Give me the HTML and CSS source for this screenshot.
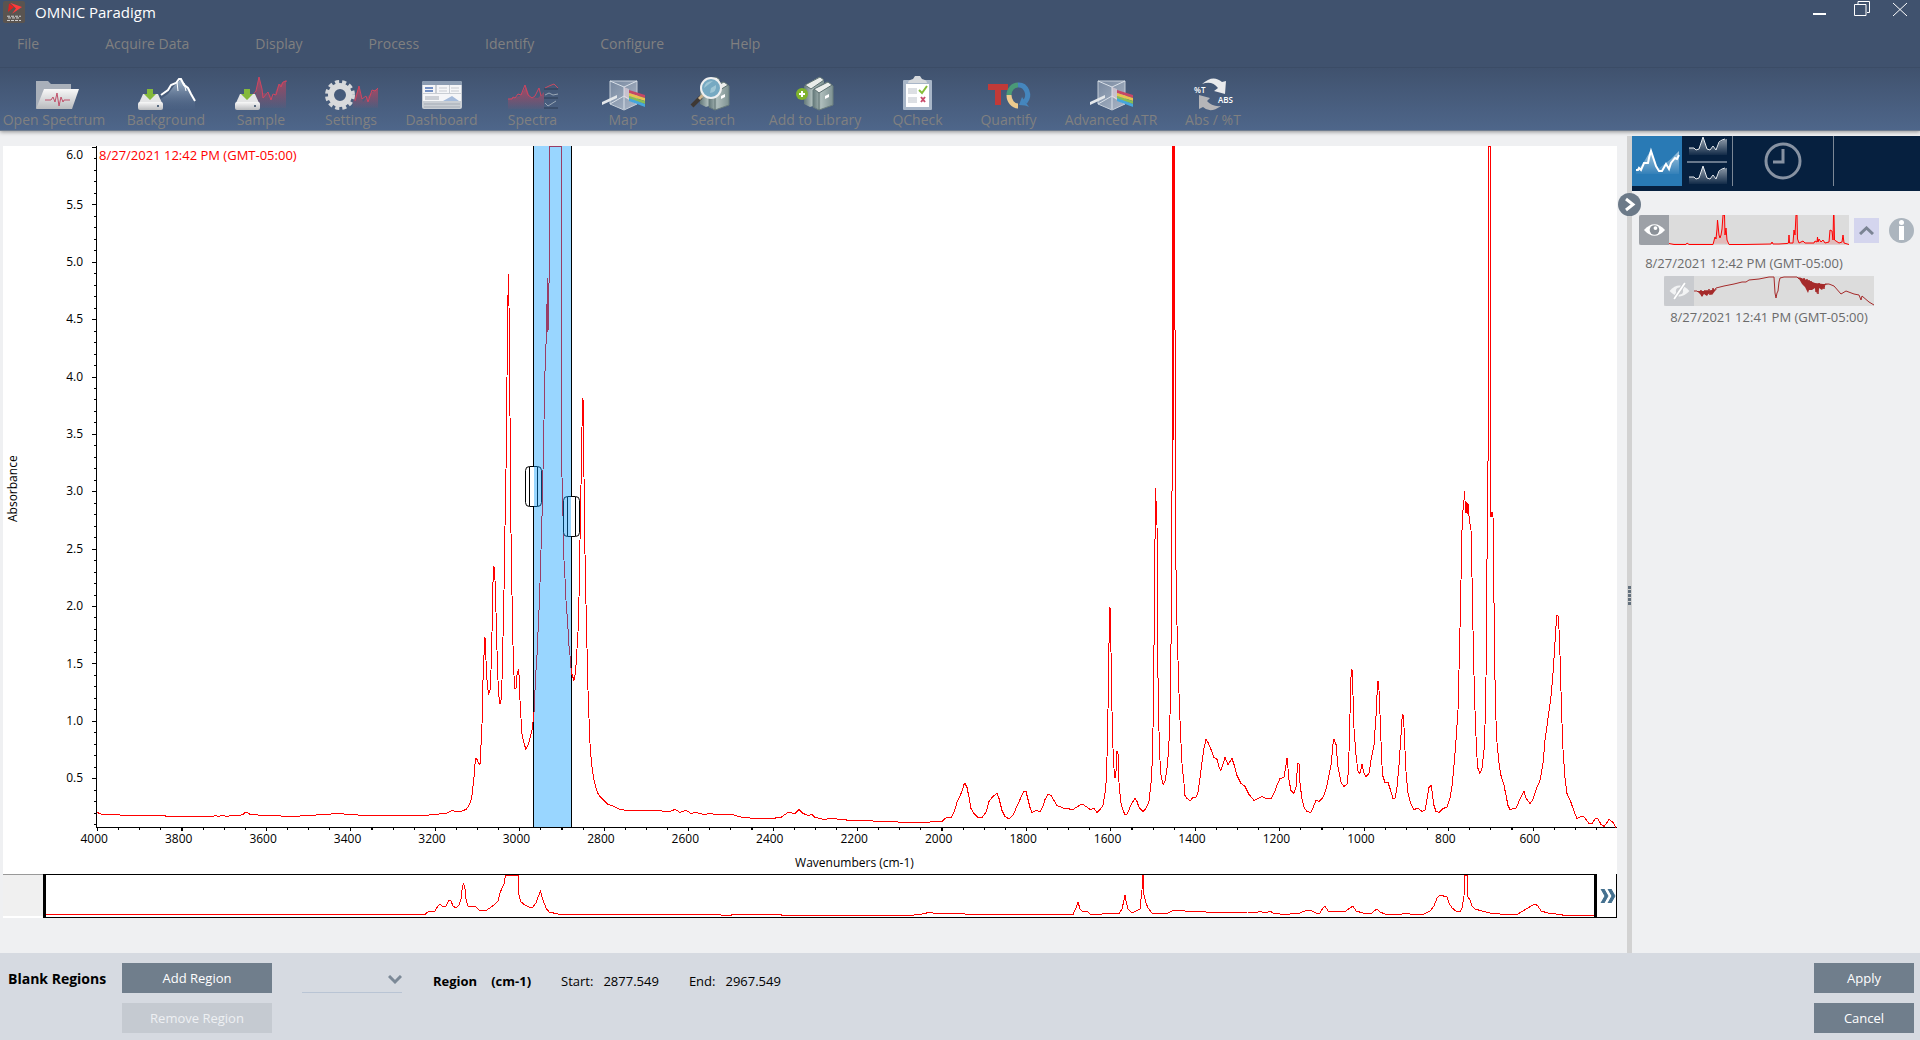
FILE: index.html
```html
<!DOCTYPE html>
<html lang="en">
<head>
<meta charset="utf-8">
<title>OMNIC Paradigm</title>
<link rel="stylesheet" href="styles.css">
</head>
<body>
<svg class="defs" aria-hidden="true">
  <defs>
    <linearGradient id="metal" x1="0" y1="0" x2="0" y2="1"><stop offset="0" stop-color="#f8f8f8"/><stop offset="1" stop-color="#b9bbbe"/></linearGradient>
    <linearGradient id="redfade" x1="0" y1="0" x2="0" y2="1"><stop offset="0" stop-color="#c04560" stop-opacity=".8"/><stop offset="1" stop-color="#c04560" stop-opacity=".05"/></linearGradient>
    <linearGradient id="snow" x1="0" y1="0" x2="0" y2="1"><stop offset="0" stop-color="#a9bccf"/><stop offset="1" stop-color="#4d6589" stop-opacity=".2"/></linearGradient>
    <linearGradient id="glass" x1="0" y1="0" x2="1" y2="1"><stop offset="0" stop-color="#8595ab"/><stop offset="1" stop-color="#c3ccd8"/></linearGradient>
    <linearGradient id="book" x1="0" y1="0" x2="1" y2="0"><stop offset="0" stop-color="#64797a"/><stop offset=".4" stop-color="#aebdbb"/><stop offset="1" stop-color="#7e9292"/></linearGradient>
    <linearGradient id="whitefade" x1="0" y1="0" x2="0" y2="1"><stop offset="0" stop-color="#fff" stop-opacity=".6"/><stop offset="1" stop-color="#fff" stop-opacity=".05"/></linearGradient>
    <symbol id="drive" viewBox="0 0 25 21">
      <path d="M5 5h15l4 9H1z" fill="#e4e5e6"/><rect x="0" y="13" width="25" height="8" rx="2" fill="url(#metal)"/><circle cx="20" cy="17" r="1" fill="#2c4560"/>
      <path d="M9 0h6v5h3l-6 6-6-6h3z" fill="#84b93b"/>
    </symbol>
    <symbol id="prism" viewBox="0 0 60 36">
      <path d="M17 6h27v23l-13 6-14-6z" fill="url(#glass)" fill-opacity=".8" stroke="#c5ced9"/>
      <path d="M17 6l14 6 13-6M31 12v22M17 29l14-8 13 8" fill="none" stroke="#d9e0e8"/>
      <path d="M9 27l15-7v3L9 30z" fill="#e4e7ea"/>
      <path d="M36 15l16 5v3l-16-5z" fill="#c64766"/><path d="M36 18l16 5v3l-16-5z" fill="#e8c350"/><path d="M36 21l16 5v3l-16-5z" fill="#87bd55"/><path d="M36 23l16 6v3l-16-6z" fill="#46a6dc"/>
      <path d="M31 12l5 2v11l-5-3z" fill="#ead7df" opacity=".6"/>
    </symbol>
    <symbol id="books" viewBox="0 0 32 36">
      <path d="M2 11L17 2l5 4v21L8 32l-6-3z" fill="url(#book)"/><path d="M3 10L18 2l4 3-13 9z" fill="#e9ece9" stroke="#5d7071"/>
      <path d="M11 15L25 7l6 4v19l-14 5-6-3z" fill="url(#book)" stroke="#6b7e7e"/><path d="M12 14L26 7l4 3-13 8z" fill="#eceeec" stroke="#5d7071"/><path d="M17 18v17" stroke="#5e7373"/><path d="M23 21l4-2v3l-4 2z" fill="#fff"/>
    </symbol>
    <symbol id="mini" viewBox="0 0 38 20">
      <path d="M0 12h5l2 2 3-1 4-12 4 12 3 1 3-3 3 3 3-7 4-3 4-1v16H0z" fill="url(#whitefade)"/>
      <path d="M0 12h5l2 2 3-1 1-3 3-9 4 12 3 1 3-4 3 4 3-8 3-2 3-1" fill="none" stroke="#e6eaee"/>
    </symbol>
  </defs>
</svg>

<header class="app-header">
  <div class="titlebar">
    <svg class="logo" viewBox="0 0 22 26" preserveAspectRatio="none" aria-hidden="true"><rect width="22" height="26" rx="2" fill="#5a5450"/><path d="M7 2l12 5-10 8 4-6z" fill="#ff3b3b"/><path d="M6 3l5 4-6 6z" fill="#e02020"/><path d="M4 18h14M5 20h12M4 23h14" stroke="#ddd" stroke-dasharray="3 1"/></svg>
    <h1 class="title">OMNIC Paradigm</h1>
    <div class="window-controls">
      <button type="button" class="minimize" aria-label="Minimize"><svg viewBox="0 0 18 18"><path d="M3 14h13" stroke="#fff" stroke-width="2"/></svg></button>
      <button type="button" aria-label="Restore"><svg viewBox="0 0 18 18"><path d="M5 4V1.500h11.500v11H14M1.500 4.500h11.500v11H1.500z" fill="none" stroke="#fff"/></svg></button>
      <button type="button" aria-label="Close"><svg viewBox="0 0 18 18"><path d="M2 3l14 13M16 3L2 16" stroke="#fff"/></svg></button>
    </div>
  </div>
  <nav class="menu" aria-label="Main menu">
    <button type="button">File</button><button type="button">Acquire Data</button><button type="button">Display</button><button type="button">Process</button><button type="button">Identify</button><button type="button">Configure</button><button type="button">Help</button>
  </nav>
  <div class="toolbar">
    <button type="button"><svg viewBox="0 0 60 36"><path d="M12 6h12l3 3h20v24H12z" fill="#a9b0ba"/><path d="M20 14h35l-7 20H12z" fill="url(#metal)"/><path d="M21 25h6l2-3 2 5 2-9 2 13 2-9 2 5 1-2h6" fill="none" stroke="#c0506a"/></svg>Open Spectrum</button>
    <button type="button"><svg viewBox="0 0 60 36"><path d="M22 26l10-7 6-8 7-7 5 6 4 5 5 10v9H26z" fill="url(#snow)"/><path d="M25 20l7-5 3-5 5-2 3-4 2 0 3 6 4 3 3 6 4 7" fill="none" stroke="#fff" stroke-width="2"/><path d="M41 7l1 9M48 8l2 8" stroke="#fff" stroke-width="1"/><use href="#drive" x="2" y="14" width="25" height="21"/></svg>Background</button>
    <button type="button"><svg viewBox="0 0 60 36"><path d="M25 26V16l3-14 4 16 6 1 4 4 5-12 8-6v28H25z" fill="url(#redfade)"/><path d="M22 20l3-4 3-14 3 12 1 9 5-6 3 8 2-6 3 1 3-11 2 3 2-5 4-1" fill="none" stroke="#cf4560"/><use href="#drive" x="4" y="14" width="25" height="21"/></svg>Sample</button>
    <button type="button"><svg viewBox="0 0 60 36"><path d="M32 26l6-14 4 15 9-10 6-4v20H32z" fill="url(#redfade)"/><path d="M34 26l4-15 3 13 4-3 2 6 4-12 3 1 3-3" fill="none" stroke="#cf4560"/><circle cx="19" cy="20" r="13" fill="none" stroke="#d5d7da" stroke-width="4" stroke-dasharray="4 3"/><circle cx="19" cy="20" r="9" fill="none" stroke="#d9dadc" stroke-width="6"/></svg>Settings</button>
    <button type="button"><svg viewBox="0 0 60 36"><rect x="10" y="6" width="40" height="28" rx="2" fill="#c9ced4"/><path d="M10 10V8q0-2 2-2h36q2 0 2 2v2z" fill="#8b9cb2"/><path d="M11 10h12v8H11zM25 10h12v8H25zM38 10h11v8H38zM11 19h38v7H11z" fill="#f5f6f8"/><path d="M13 13h8M13 16h8" stroke="#7591c4" stroke-width="2"/><path d="M27 13h8M27 16h8M39 13h8M39 16h8" stroke="#c7cbd1"/><path d="M13 22h14M13 24h14M12 29h36M12 32h36" stroke="#a4abb5"/><path d="M31 26l9-5 7 5z" fill="#a5bbdb"/></svg>Dashboard</button>
    <button type="button"><svg viewBox="0 0 60 36"><path d="M5 24l12-3 6-9 4 10 8 1 6-6v17H5z" fill="url(#redfade)"/><path d="M5 24h4l1-2 2 1 3-4 3 1 2-5 2-5 3 10 4 3 3-2 4-8 2 8" fill="none" stroke="#cf4560" stroke-width="1"/><path d="M42 13l4-2 5-2 4 4" fill="none" stroke="#c94b61"/><path d="M41 14h14M41 23h14M41 33h14" stroke="#2c3c54"/><path d="M42 20l4-2 4 2 5-1M42 28l3 3 8-5" fill="none" stroke="#9ba8b6" stroke-width="1"/></svg>Spectra</button>
    <button type="button"><svg viewBox="0 0 60 36"><use href="#prism" width="60" height="36"/></svg>Map</button>
    <button type="button"><svg viewBox="0 0 60 36"><use href="#books" x="15" y="0" width="32" height="36"/><path d="M18 22L9 31" stroke="#3e3834" stroke-width="4"/><path d="M20 20l-4 4" stroke="#cbb38e" stroke-width="3"/><circle cx="28" cy="13" r="10" fill="#76a9c2" stroke="#f0f0f0" stroke-width="2"/><path d="M21 13q1-7 9-7M27 18q7-1 6-8l-5 3z" fill="#9fc6d5"/></svg>Search</button>
    <button type="button"><svg viewBox="0 0 60 36"><use href="#books" x="17" y="0" width="32" height="36"/><circle cx="17" cy="19" r="6" fill="#7fb32c"/><path d="M14 19h6M17 16v6" stroke="#fff" stroke-width="2"/></svg>Add to Library</button>
    <button type="button"><svg viewBox="0 0 60 36"><rect x="15" y="5" width="29" height="30" rx="1" fill="#a8b6c8"/><rect x="18" y="9" width="23" height="23" fill="#fff"/><path d="M20 8q0-3 5-4l2-3h5l2 3q5 1 5 4z" fill="#d6d9dc"/><path d="M20 14h9M20 16h9M20 18h9M20 23h9M20 25h9M20 27h9" stroke="#bac0c8"/><path d="M31 15l3 3 5-7" fill="none" stroke="#85bd38" stroke-width="2"/><path d="M33 22l4 5M37 22l-4 5" stroke="#c94c6c" stroke-width="2"/></svg>QCheck</button>
    <button type="button"><svg viewBox="0 0 60 36"><path d="M9 9h20v6h-7v15h-6V15H9z" fill="#c23a38"/><g fill="none" stroke-width="5"><path d="M30 20a9 10 0 0 1 9-10" stroke="#4a9a77"/><path d="M39 10a9 10 0 0 1 7 17" stroke="#4586bd"/><path d="M39 31a9 11 0 0 1-9-11" stroke="#edca8d"/></g><path d="M40 30q7 0 10 2l-7-10z" fill="#4586bd"/></svg>Quantify</button>
    <button type="button"><svg viewBox="0 0 60 36"><use href="#prism" width="60" height="36"/></svg>Advanced ATR</button>
    <button type="button"><svg viewBox="0 0 60 36"><path d="M19 9Q30-1 39 7l4-1-1 13-11-3 4-3Q29 5 19 9z" fill="#e9eaec"/><path d="M16 20l11 3-3 3q5 6 14 5-11 8-18 1l-4 2z" fill="#b5b5b8"/><text x="11" y="18" class="glyph">%T</text><text x="35" y="28" class="glyph">ABS</text></svg>Abs / %T</button>
  </div>
</header>

<main class="workspace">
  <section class="chart-pane" aria-label="Spectrum">
    <div class="chart">
      <div class="y-title">Absorbance</div>
      <div class="y-labels"><span class="top">6.0</span><span>5.5</span><span>5.0</span><span>4.5</span><span>4.0</span><span>3.5</span><span>3.0</span><span>2.5</span><span>2.0</span><span>1.5</span><span>1.0</span><span>0.5</span></div>
      <div class="plot">
        <svg viewBox="92 146 1525 686" preserveAspectRatio="none" role="img" aria-label="Absorbance against wavenumbers">
          <g class="axis">
            <path d="M96.500 146V828M96 827.500H1617"/>
            <path d="M95 147V825" stroke-width="2" pathLength="1356" stroke-dasharray="2 20.950"/>
            <path d="M94 147V825" stroke-width="4" pathLength="1356" stroke-dasharray="2 112.750"/>
            <path d="M97 828.500H1617" stroke-width="2" pathLength="1440" stroke-dasharray="1 19"/>
            <path d="M97 829H1617" stroke-width="4" pathLength="1440" stroke-dasharray="1 79"/>
            <path d="M533.500 146V828M571.500 146V828"/>
          </g>
          <polyline class="trace" transform="translate(0 .4)" points="97,812 102,814 132,815 187,816 213,816 215,815 218,816 223,815 226,816 233,815 240,815 243,814 245,812 247,812 250,814 256,814 260,815 294,816 309,815 326,814 338,813 348,814 364,815 425,815 435,814 446,813 452,810 455,811 461,811 466,809 469,805 471,800 472,795 474,777 475.500,758 477,759 478,762 480,764 481,745 482,724 483,680 484,655 485,637 486,660 487,680 488.500,694 490,690 491,670 492,632 493,582 494,566 495,580 496,612 497,650 498,680 499,697 500,704 501,700 502,680 503,637 504,590 505,526 506.500,441 507.500,316 508.500,274 509,306 510,416 511,533 512,595 513,645 514,675 515,688 516,688 517,675 518.500,669 519.500,680 520,700 521,718 522,734 524,743 526,749 528,745 530,738 532,730 533,722 534,712 535,690 536,670 537,655 538,632 539,610 540,583 541,550 542,516 543,470 544,420 545,371 546.500,331 547.500,278 548,332 548.700,283 549,287 549.500,146.500 561.500,146.500 561.500,457 563,516 564,560 565,578 566,600 567.500,620 569,646 570,655 571,668 572,674 574,680 575,675 576,665 578,632 579,597 580,540 581,485 582.500,398 583,398 584,477 585,554 586,604 587,648 588,690 589,718 590,743 591,757 592,767 594,780 596,788 598,793 600,796 604,800 608,804 614,806 620,809 626,810 650,810 670,811 675,809 680,812 686,810 691,813 696,812 704,814 711,813 715,814 732,814 742,817 755,818 772,818 781,817 788,812 795,813 799,809 803,813 808,815 812,814 815,817 824,819 832,818 850,820 862,820 880,821 910,822 922,822 942,821 945,818 948,817 951,817 954,812 957,802 962,791 964,784 965,783 967,787 969,797 971,808 974,813 978,817 982,817 986,812 989,801 993,796 997,793 999,798 1002,810 1005,816 1009,818.500 1013,815 1016,808 1021,797 1024,790.500 1026,791 1028,799 1030,807 1032,812 1036,810 1040,811 1043,806 1045,799 1048,794 1051,795 1054,800 1057,805 1064,808 1073,809 1078,806 1082,803.500 1086,806 1090,809 1094,808 1097,812 1100,809 1103,805 1105,793 1106,783 1107,757 1108,710 1109,643 1110,607 1111,652 1112,711 1113,748 1114,768 1115,778 1116,771 1117,751 1118,753 1119,782 1120,794 1121,803 1123,810 1125,814 1127,814 1130,807 1133,801 1135,798 1137,801 1139,807 1143,811 1146,808 1149,801 1150,792 1151,783 1152,766 1153,729 1154,646 1155,540 1155.500,488 1157,525 1158,678 1159,731 1160,760 1161,775 1163,784 1165,781 1167,768 1168,757 1169,741 1170,716 1171,645 1172,500 1172.500,146 1173.500,146 1173.500,440 1174.500,146 1175,330 1176,570 1177,625 1178,660 1179,693 1180,720 1181,743 1182,763 1184,783 1185,795 1187,798 1190,800.500 1193,797 1196,797 1198,792 1200,778 1202,762 1204,748 1206,739 1208,742 1211,749 1214,757 1217,759 1219,767 1221,770 1223,764 1225,757 1228,764 1232,758 1234,764 1237,775 1241,783 1245,786 1249,794 1254,800 1258,798 1262,796 1266,798 1271,798 1274,793 1277,785 1280,778 1284,777 1286,765 1287,758 1288,768 1289,780 1291,790 1294,793 1296,787 1297,773 1298,763 1299,763 1300,783 1302,799 1304,807 1307,811 1311,812 1314,805 1316,800 1319,801 1323,797 1326,789 1329,775 1331,765 1333,744 1334,739 1336,744 1338,767 1341,782 1344,786 1347,784 1348,775 1349,752 1350,714 1351,677 1352,669 1353,695 1354,728 1356,755 1358,771 1360,773 1362,764 1364,773 1366,776 1369,773 1371,760 1374,745 1375,730 1376,716 1377,695 1378,681 1379,690 1380,714 1381,741 1382,765 1383,776 1385,782 1388,782 1390,788 1393,798 1395,798 1397,787 1399,765 1401,735 1402,719 1403,714 1404,727 1405,750 1406,771 1408,793 1411,804 1414,809 1418,808 1422,811 1425,810 1427,799 1429,787 1431,785 1432,791 1434,805 1436,811 1439,812 1443,808 1447,807 1450,798 1452,786 1454,765 1456,740 1458,710 1459,670 1460,628 1461,580 1462,530 1463,510 1464,500 1464.500,491 1465,500 1466,513 1467,502 1468,514 1468.500,504 1469,516 1471,530 1472,577 1473,630 1474,675 1475,710 1476,736 1477,757 1478,768 1480,773 1482,768 1484,750 1485,725 1486,678 1487,560 1488,470 1488.500,146.500 1490.500,146.500 1491,517 1492,512 1493,516 1494,603 1495,680 1496,720 1497,742 1499,763 1501,775 1504,785 1506,795 1508,805 1510,809 1516,808 1519,801 1522,795 1524,791 1526,798 1530,803 1533,799 1537,787 1540,780 1543,763 1545,740 1548,718 1551,696 1553,673 1555,642 1556,626 1557,615 1558,615 1559,629 1560,655 1561,691 1562,723 1563,749 1565,778 1567,793 1571,802 1574,811 1577,818 1583,815.500 1586,819 1589,823 1592,823 1595,818.500 1598,818.500 1601,824 1604,826 1607,822 1609,819 1613,822 1616,827"/>
          <g class="handle">
            <rect x="525.500" y="466.500" width="16" height="40" rx="4"/><path d="M529.500 467V506M537.500 467V506"/>
            <rect x="563.500" y="496.500" width="16" height="40" rx="4"/><path d="M567.500 497V536M575.500 497V536"/>
          </g>
          <rect class="band" x="534" y="146" width="37" height="681"/>
        </svg>
        <span class="trace-name">8/27/2021 12:42 PM (GMT-05:00)</span>
      </div>
      <div class="x-labels"><span>4000</span><span>3800</span><span>3600</span><span>3400</span><span>3200</span><span>3000</span><span>2800</span><span>2600</span><span>2400</span><span>2200</span><span>2000</span><span>1800</span><span>1600</span><span>1400</span><span>1200</span><span>1000</span><span>800</span><span>600</span></div>
      <div class="x-title">Wavenumbers (cm-1)</div>
    </div>
    <div class="navigator">
      <div class="nav-blank"></div>
      <div class="nav-view">
        <svg viewBox="46 875 1548 42" preserveAspectRatio="none" role="img" aria-label="Spectrum overview">
          <polyline class="trace" points="46,914.500 425,914.500 429,911 435,911 438,906 440,904 443,907 446,906 449,900 451,901 453,906 456,908 459,905 461,899 462,890 463.500,883 465,889 466,899 468,906 471,907 475,906 479,910 485,911 490,908 495,904 498,901 500,893 502,888 504,884 505.500,875.500 518.500,875.500 519,895 521,902 525,905 529,907 533,907 536,903 538,897 539,895 540.500,890 541,893 543,900 546,908 549,912 560,914.500 720,914.500 722,915.500 730,915.500 733,914.500 780,914.500 783,915.500 910,915.500 922,914 931,912 935,914 955,913 965,914 975,914.500 1073,914.500 1076,908 1078,902 1080,909 1083,912 1087,911 1090,914 1102,914 1106,913 1119,914 1122,909 1124,900 1125,895 1126,901 1128,909 1132,913 1136,911 1140,909 1142,890 1142.500,875 1143.500,875 1144,895 1146,903 1148,908 1152,913 1168,913 1172,911 1180,910 1190,912 1200,911 1212,913 1248,912 1258,912 1260,911 1262,912 1266,913 1270,911 1273,913 1280,914 1290,914 1300,913 1307,910 1312,911 1316,913 1320,913 1323,908 1325,906 1328,911 1336,912 1346,911 1350,908 1353,906 1356,911 1363,913 1371,914 1374,911 1377,909 1380,912 1385,914 1402,914 1406,913 1410,914 1424,914 1430,911 1434,906 1437,898 1440,895 1447,897 1449,903 1452,908 1456,911 1460,912 1462,908 1464,896 1465,875.500 1467.500,875.500 1468,897 1470,900 1472,906 1475,909 1482,911 1490,913 1500,914 1518,914 1526,909 1533,905 1535,904 1538,906 1541,911 1548,913 1560,914.500 1565,915.500 1594,915.500"/>
        </svg>
      </div>
      <button type="button" class="nav-more" aria-label="More"><svg viewBox="0 0 16 14"><path d="M1 0h3l4 7-4 7H1l4-7zM8 0h3l4 7-4 7H8l4-7z" fill="#44708f" stroke="#44708f"/></svg></button>
    </div>
  </section>

  <div class="splitter">
    <button type="button" class="collapse" aria-label="Collapse panel"><svg viewBox="0 0 23 23"><circle cx="11.500" cy="11.500" r="11.500" fill="#6c7a89"/><path d="M8 6l7 5.500L8 17" fill="none" stroke="#fff" stroke-width="3"/></svg></button>
    <svg class="grip" viewBox="0 0 5 20"><path d="M2.500 0v20" stroke="#63707d" stroke-width="3" stroke-dasharray="3 1"/></svg>
  </div>

  <aside class="side">
    <div class="view-tabs">
      <button type="button" class="tab active" aria-label="Single view"><svg viewBox="0 0 50 50"><path d="M4 34l6-5 9-15 7 19 13-10 8-8v23H4z" fill="url(#whitefade)"/><path d="M4 34h2l1-2 2 2 3-7 4 0 1-5 2-7 5 15 3 5 3 0 4-7 3 5 2-6 4-5 2 1 2-4" fill="none" stroke="#fff" stroke-width="2"/></svg></button>
      <button type="button" class="tab" aria-label="Stacked view"><svg viewBox="0 0 50 50"><use href="#mini" x="7" y="0" width="38" height="20"/><path d="M5 26h40" stroke="#68788c" stroke-width="2"/><use href="#mini" x="7" y="29" width="38" height="20"/></svg></button>
      <button type="button" class="tab history" aria-label="History"><svg viewBox="0 0 38 38"><g fill="none" stroke="#8792a2"><circle cx="19" cy="19" r="17" stroke-width="3"/><path d="M19 7v13H9" stroke-width="3"/></g></svg></button>
    </div>
    <ul class="spectra">
      <li class="spectrum">
        <div class="thumb">
          <button type="button" class="eye" aria-label="Hide spectrum"><svg viewBox="0 0 24 16"><path d="M1 8q11-12 22 0q-11 12-22 0z" fill="#fff"/><circle cx="12" cy="8" r="5" fill="#8b9198"/><circle cx="13" cy="6" r="2" fill="#fff"/></svg></button>
          <svg class="preview" viewBox="0 0 180 30"><polyline points="0,28.500 5,29.500 17,29.500 18,28 20,29.500 40,29.500 44,29.500 46,22 47,24 48,14 48.500,5 50,20 51,23 52,20 53,14 54,0 55.500,0 56,20 57,13 58,25 60,29.500 75,29.500 102,29 103,27 104,29 110,29 118,28.500 119.500,28 120,20 120.500,28 124,28 125,15 126,20 127,0 128,0 128.500,24 130,28 134,26 136,28 145,28 146,26 148,27 148.500,22 149,27 150,24 152,27 154,25 156,28 160,27 161,15 163,16 164,25 164.500,0 165,0 165.500,25 170,28 173,27 174,20 175,28 180,29.500" fill="rgba(255,0,0,.15)" stroke="#f00"/></svg>
        </div>
        <button type="button" class="expand" aria-label="Collapse"><svg viewBox="0 0 15 9"><path d="M1 8l6.500-6L14 8" fill="none" stroke="#7b8494" stroke-width="3"/></svg></button>
        <button type="button" class="info" aria-label="Information"><svg viewBox="0 0 25 25"><circle cx="12.500" cy="12.500" r="12.500" fill="#acb5be"/><circle cx="12.500" cy="4.500" r="2.500" fill="#fff"/><path d="M12.500 8v14" stroke="#fff" stroke-width="5"/></svg></button>
      </li>
      <li class="caption">8/27/2021 12:42 PM (GMT-05:00)</li>
      <li class="spectrum child">
        <div class="thumb">
          <button type="button" class="eye off" aria-label="Show spectrum"><svg viewBox="0 0 24 20"><path d="M1 10q11-12 22 0q-11 12-22 0z" fill="#f2f3f4"/><circle cx="12" cy="10" r="4" fill="#c9cbcf"/><path d="M18 1L6 19" stroke="#c5c7cb" stroke-width="4"/><path d="M18 1L6 19" stroke="#fff" stroke-width="2"/></svg></button>
          <svg class="preview" viewBox="0 0 180 30"><path d="M3 15l3 3 2 3 2-3 3 2 2-3 3 2 3-4 2-2-8 2z" fill="#a52a2a"/><path d="M104 1l4 7 3 3 3 6 1-3 3 0 3-2 2 6 2-6 3 2 3-5 3-1-5 0-8-1-8-3z" fill="#a52a2a"/><polyline points="0,15 3,15 4,16 5,15 6,17 7,14 8,20 9,15 10,17 11,14 12,19 13,14 14,18 15,13 16,19 17,14 18,16 19,12 20,15 22,12 30,10 40,8 48,6 52,6 55,4 65,3 75,1 80,1 81,17 82,22 83,17 84,15 85,6 86,2 90,1 103,1 105,3 107,2 109,6 110,2 112,8 113,3 114,12 115,4 116,14 117,5 118,13 119,7 120,12 121,8 122,16 123,8 124,18 125,7 127,12 128,8 130,13 131,8 135,8 140,10 147,18 152,15 160,18 165,19 167,24 168,20 175,26 180,29" fill="none" stroke="#a52a2a"/></svg>
        </div>
      </li>
      <li class="caption child">8/27/2021 12:41 PM (GMT-05:00)</li>
    </ul>
  </aside>
</main>

<footer class="regions">
  <h2 class="regions-title">Blank Regions</h2>
  <div class="stack">
    <button type="button" class="btn">Add Region</button>
    <button type="button" class="btn" disabled>Remove Region</button>
  </div>
  <div class="picker">
    <select aria-label="Region"><option></option></select>
    <svg viewBox="0 0 14 10" aria-hidden="true"><path d="M1 1l6 6 6-6" fill="none" stroke="#7c8997" stroke-width="3"/></svg>
  </div>
  <dl class="range">
    <div class="head"><dt>Region</dt><dd>(cm-1)</dd></div>
    <div><dt>Start:</dt><dd>2877.549</dd></div>
    <div><dt>End:</dt><dd>2967.549</dd></div>
  </dl>
  <div class="stack actions">
    <button type="button" class="btn">Apply</button>
    <button type="button" class="btn">Cancel</button>
  </div>
</footer>
</body>
</html>
```
FILE: styles.css
```css
* { box-sizing: border-box; }
body {
  margin: 0;
  height: 100vh;
  min-height: 700px;
  display: flex;
  flex-direction: column;
  font: 12px/16px "Open Sans", "Noto Sans", sans-serif;
  color: #000;
  background: #eff0f2;
}
button { margin: 0; padding: 0; border: 0; background: none; font: inherit; color: inherit; }
h1, h2, ul, dl, dd { margin: 0; padding: 0; }
svg { display: block; }
.defs { position: absolute; width: 0; height: 0; }

.app-header {
  position: relative;
  flex: none;
  background: #40526e;
  box-shadow: 0 1px 4px rgba(0, 0, 0, .4);
}
.titlebar { display: flex; align-items: flex-start; height: 30px; padding: 0 11px 0 3px; }
.logo { width: 22px; height: 22px; margin: 1px 10px 0 0; }
.title { font-size: 15px; line-height: 24px; font-weight: 400; color: #fff; }
.window-controls { display: flex; gap: 20px; margin-left: auto; }
.window-controls svg { width: 18px; height: 18px; }
.minimize { margin-right: 5px; }
.menu { display: flex; gap: 66px; height: 37px; padding-left: 17px; font-size: 14px; line-height: 28px; color: #808080; }
.menu button { height: 28px; }
.toolbar {
  display: grid;
  grid-template-columns: 108px 84px 74px 74px 75px 75px 74px 74px 98px 75px 75px 98px 74px;
  column-gap: 16px;
  height: 64px;
  padding-top: 7px;
  border-top: 1px solid #3b4c66;
  border-bottom: 1px solid #6f7d90;
  background: linear-gradient(#40526e, #4e668a);
  font-size: 14px;
  line-height: 17px;
  color: #808080;
}
.toolbar button { display: flex; flex-direction: column; align-items: center; white-space: nowrap; }
.toolbar svg { width: 60px; height: 36px; }
.glyph { font-size: 8px; font-weight: 600; fill: #fff; }

.workspace { flex: 1; min-height: 0; display: flex; padding-top: 5px; }
.chart-pane { flex: 1; min-width: 0; display: flex; flex-direction: column; padding: 10px 10px 35px 3px; }
.chart {
  flex: 1;
  min-height: 0;
  display: grid;
  grid-template-columns: 20px 69px 1fr;
  grid-template-rows: 1fr 14px 28px;
  background: #fff;
}
.y-title { writing-mode: vertical-rl; transform: rotate(180deg); text-align: center; line-height: 20px; }
.y-labels { display: flex; flex-direction: column; padding: 0 9px 25px 0; text-align: right; }
.y-labels span { flex: 1; display: flex; align-items: center; justify-content: flex-end; }
.y-labels .top { flex: none; height: 30px; align-items: flex-start; padding-top: 1px; }
.plot { position: relative; min-width: 0; min-height: 0; }
.plot svg { width: 100%; height: 100%; }
.axis { fill: none; stroke: #000; shape-rendering: crispEdges; }
.trace { fill: none; stroke: #f00; shape-rendering: crispEdges; }
.handle { fill: #fff; stroke: #000; }
.band { fill: rgba(0, 153, 255, .4); }
.trace-name { position: absolute; left: 7px; top: 1px; font-size: 13px; color: #f00; }
.x-labels {
  grid-column: 1 / -1;
  display: grid;
  grid-template-columns: repeat(18, 1fr);
  padding: 0 45px 0 49px;
  text-align: center;
  line-height: 14px;
}
.x-title { grid-column: 1 / -1; padding: 9px 0 0 89px; text-align: center; }
.navigator { flex: none; display: flex; height: 44px; background: #fff; }
.nav-blank { width: 40px; height: 42px; border-top: 1px solid #999; background: #f0f0f0; }
.nav-view { flex: 1; min-width: 0; border: 1px solid #000; border-width: 1px 3px; }
.nav-view svg { width: 100%; height: 42px; }
.nav-more { width: 20px; padding-left: 3px; border: 1px solid #000; border-width: 0 1px 1px 0; }
.nav-more svg { width: 16px; height: 14px; }

.splitter { position: relative; flex: none; width: 5px; display: flex; align-items: center; background: #d2d2d2; }
.grip { width: 5px; height: 20px; margin-top: 102px; }
.collapse { position: absolute; left: -9px; top: 57px; }
.collapse svg { width: 23px; height: 23px; }

.side { flex: none; width: 288px; }
.view-tabs { display: flex; height: 55px; background: #06203f; }
.tab { width: 50px; height: 50px; }
.tab svg { width: 50px; height: 50px; }
.tab.active { background: #297ab5; }
.tab.history { width: 102px; padding-left: 31px; border: 1px solid #7b8796; border-width: 0 1px; }
.tab.history svg { width: 38px; height: 38px; }
.spectra { list-style: none; padding: 24px 6px 0 7px; color: #6b6b6b; }
.spectrum { display: flex; align-items: center; }
.child { margin-left: 25px; }
.thumb { display: flex; width: 210px; height: 30px; background: #dcdcdc; }
.preview { width: 180px; height: 30px; }
.eye { display: flex; align-items: center; justify-content: center; width: 30px; height: 30px; border-radius: 2px 0 0 2px; background: #9da1a7; }
.eye svg { width: 23px; height: 18px; }
.eye.off { background: #c9cbcf; }
.expand { display: flex; align-items: center; justify-content: center; width: 25px; height: 25px; margin: 0 10px 0 5px; background: #d4d5ee; }
.expand svg { width: 15px; height: 9px; }
.info svg { width: 25px; height: 25px; }
.caption { width: 210px; height: 31px; padding-top: 10px; font-size: 13px; text-align: center; white-space: nowrap; }
.caption.child { padding-top: 3px; }

.regions { flex: none; display: flex; align-items: flex-start; padding: 10px 6px 7px 8px; background: #d6dae1; }
.regions-title { width: 114px; font-size: 14px; line-height: 32px; font-weight: 700; white-space: nowrap; }
.stack { display: flex; flex-direction: column; gap: 10px; width: 150px; }
.stack.actions { width: 100px; margin-left: auto; }
.btn { height: 30px; background: #707e8c; color: #fff; font-size: 13px; }
.btn:disabled { background: #c5cad1; color: #eef0f3; }
.picker { position: relative; width: 100px; margin: 0 31px 0 30px; }
.picker select { display: block; width: 100px; height: 30px; border: 0; border-bottom: 1px solid #b9c4d4; background: none; appearance: none; }
.picker svg { position: absolute; right: 0; top: 12px; width: 14px; height: 10px; }
.range { display: flex; gap: 30px; font-size: 13px; line-height: 36px; }
.range div { display: flex; gap: 10px; }
.range .head { gap: 14px; font-weight: 700; }
```
